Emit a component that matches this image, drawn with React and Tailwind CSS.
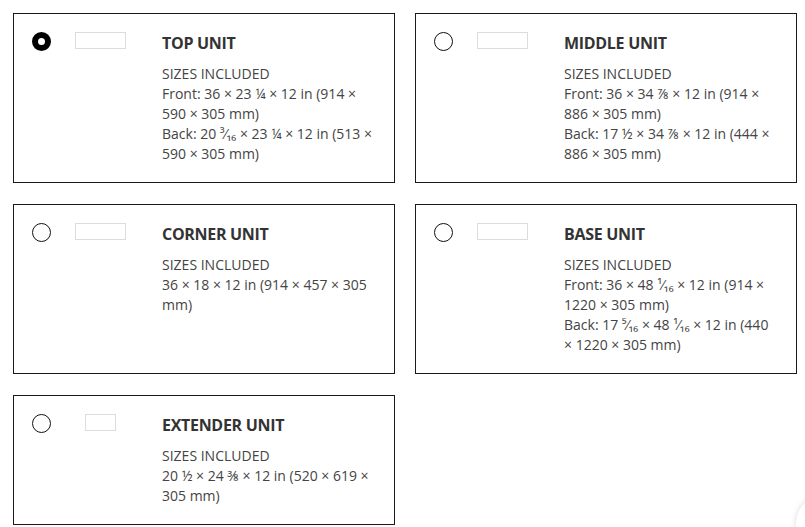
import React from 'react';

const units = [
    {
        name: 'TOP UNIT',
        selected: true,
        thumb: 'w-[51px]',
        lines: ['Front: 36 × 23 ¼ × 12 in (914 × 590 × 305 mm)', 'Back: 20 ³⁄₁₆ × 23 ¼ × 12 in (513 × 590 × 305 mm)'],
    },
    {
        name: 'MIDDLE UNIT',
        thumb: 'w-[51px]',
        lines: ['Front: 36 × 34 ⅞ × 12 in (914 × 886 × 305 mm)', 'Back: 17 ½ × 34 ⅞ × 12 in (444 × 886 × 305 mm)'],
    },
    {
        name: 'CORNER UNIT',
        thumb: 'w-[51px]',
        lines: ['36 × 18 × 12 in (914 × 457 × 305 mm)'],
    },
    {
        name: 'BASE UNIT',
        thumb: 'w-[51px]',
        lines: ['Front: 36 × 48 ¹⁄₁₆ × 12 in (914 × 1220 × 305 mm)', 'Back: 17 ⁵⁄₁₆ × 48 ¹⁄₁₆ × 12 in (440 × 1220 × 305 mm)'],
    },
    {
        name: 'EXTENDER UNIT',
        thumb: 'w-[31px]',
        lines: ['20 ½ × 24 ⅜ × 12 in (520 × 619 × 305 mm)'],
    },
];

function UnitCard({ unit }) {
    return (
        <div className="flex border border-[#1a1a1a] bg-white pt-[18px] pb-[18px] pl-[18px] pr-[18px]">
            {/* radio */}
            <div
                className={
                    unit.selected
                        ? 'w-[19px] h-[19px] shrink-0 rounded-full border-[6px] border-black bg-white'
                        : 'w-[19px] h-[19px] shrink-0 rounded-full border border-[#111] bg-white'
                }
            />
            {/* thumbnail */}
            <div className="ml-[4px] w-[90px] shrink-0 flex justify-center">
                <div className={`${unit.thumb} h-[17px] border border-[#dcdcdc] bg-white`} />
            </div>
            <div className="ml-[17px] flex-1 min-w-0">
                <div className="text-[16px] leading-[22px] font-bold text-[#333] tracking-[-0.3px]">{unit.name}</div>
                <div className="mt-[10px] text-[14px] leading-[20px] text-[#444]">
                    <div>SIZES INCLUDED</div>
                    {unit.lines.map((l, i) => (
                        <div key={i}>{l}</div>
                    ))}
                </div>
            </div>
        </div>
    );
}

export default function App() {
    return (
        <div
            className="relative min-h-[527px] w-[805px] overflow-hidden bg-white"
            style={{ fontFamily: '"Open Sans", "Noto Sans", sans-serif' }}
        >
            <div className="grid grid-cols-[382px_382px] gap-x-[20px] gap-y-[21px] pl-[13px] pt-[13px]">
                {units.map((u) => (
                    <UnitCard key={u.name} unit={u} />
                ))}
            </div>
            {/* chat bubble peeking from the corner */}
            <div className="absolute left-[796px] top-[494px] h-[60px] w-[60px] rounded-full bg-white shadow-[0_0_6px_rgba(0,0,0,0.15)]" />
        </div>
    );
}
